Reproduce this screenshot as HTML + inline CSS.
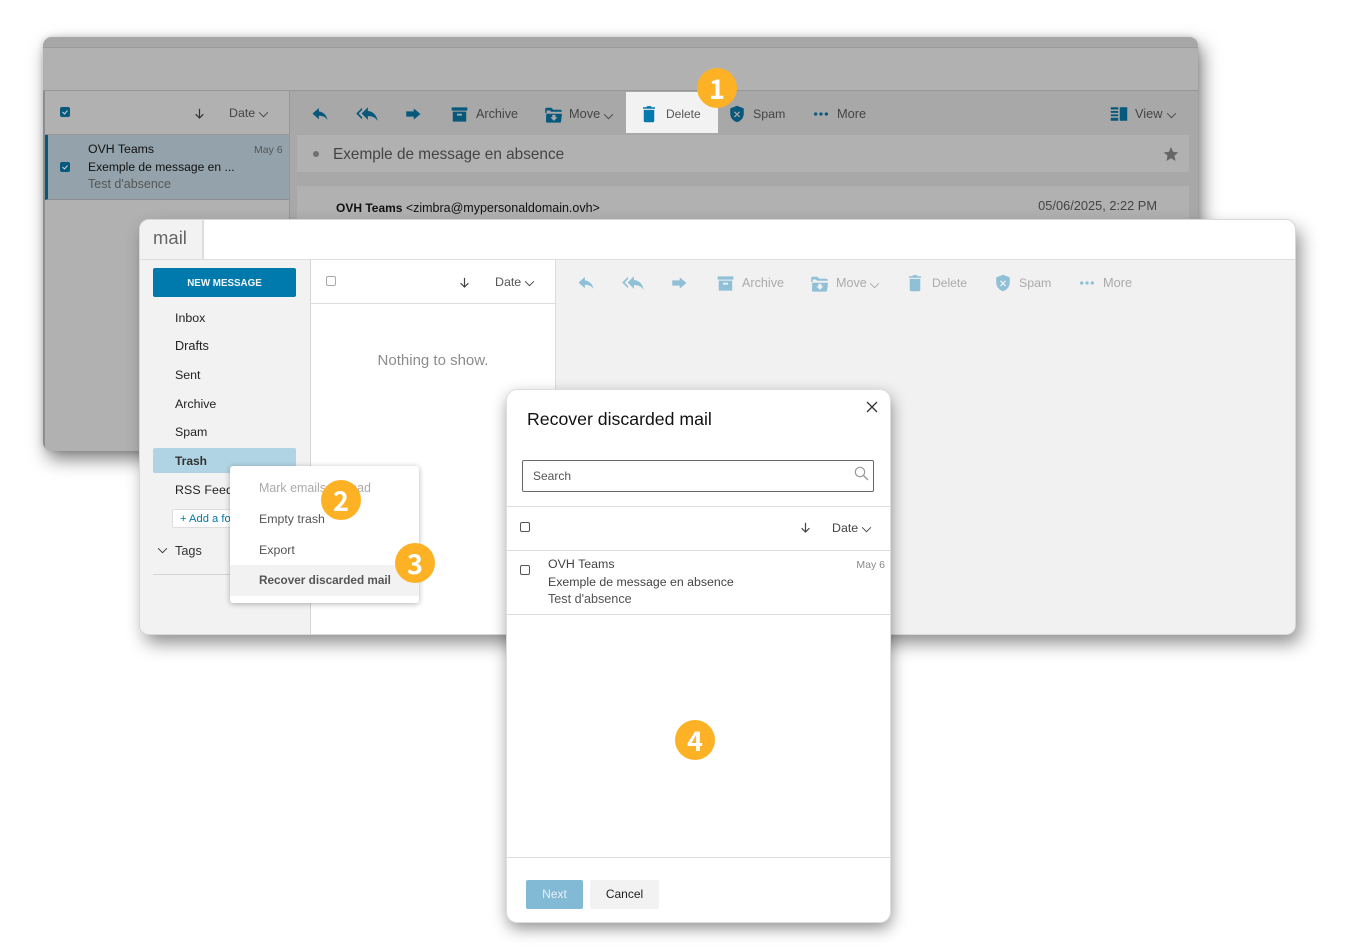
<!DOCTYPE html>
<html><head><meta charset="utf-8"><style>
html,body{margin:0;padding:0;background:#fff}
body{width:1350px;height:950px;position:relative;overflow:hidden;font-family:"Liberation Sans",sans-serif;font-size:12.4px;color:#333}
.a{position:absolute}
.t{position:absolute;white-space:nowrap;line-height:16px}
svg{position:absolute;overflow:visible}
.b{position:absolute;width:40px;height:40px;border-radius:50%;background:#fdb124;color:#fff;font-family:"Noto Sans CJK JP","Liberation Sans",sans-serif;font-weight:bold;font-size:27px;line-height:40px;text-align:center;z-index:50}
.cb{position:absolute;width:8px;height:8px;border:1px solid #555;border-radius:2px;background:#fff}
</style></head><body>
<svg width="0" height="0" style="position:absolute"><defs>
<symbol id="reply" viewBox="0 0 24 24"><path d="M10.500 8.500V4L2 11.500l8.500 7.500v-4.600c5 0 8.800 1.400 11.500 5.600-1-5.500-4.500-10.500-11.500-11.500z"/></symbol>
<symbol id="replyall" viewBox="0 0 24 24"><path d="M6.500 7.500V5L0 11.500 6.500 18v-2.500L2.800 11.500zM13 8.500V4.500l-7 7 7 7v-4.100c5 0 8.500 1.400 11 5.600-1-5.500-4-10.500-11-11.500z"/></symbol>
<symbol id="forward" viewBox="0 0 24 24"><path d="M3 8.500h10V4.500l9 7.500-9 7.500v-4H3z"/></symbol>
<symbol id="archive" viewBox="0 0 24 24"><path fill-rule="evenodd" d="M1 2h22v4.500H1zM2.500 8h19v14h-19zM8.500 11v2.500h7V11z"/></symbol>
<symbol id="move" viewBox="0 0 24 24"><path fill-rule="evenodd" d="M1.500 5.500a2 2 0 012-2h6l2 2.500h9a2 2 0 012 2v.5H9L7.500 7H3.300v3.200h-1.800zM2.800 11h20l-1.300 10a1.500 1.500 0 01-1.500 1.300H4a1.500 1.500 0 01-1.500-1.300zM10.500 12.500v3H8l4.500 4.500 4.500-4.500h-2.500v-3z"/></symbol>
<symbol id="trash" viewBox="0 0 24 24"><path d="M9 1.500h6V3h5v2H4V3h5zM5 6.500h14V21a2 2 0 01-2 2H7a2 2 0 01-2-2z"/></symbol>
<symbol id="spam" viewBox="0 0 24 24"><path fill-rule="evenodd" d="M12 1l9 3.500v7c0 5.500-3.800 9.800-9 11.500-5.200-1.700-9-6-9-11.500v-7zM9.200 8.500L8 9.700l2.800 2.800L8 15.300l1.200 1.200 2.800-2.800 2.800 2.800 1.200-1.200-2.800-2.800L16 9.700l-1.200-1.200L12 11.300z"/></symbol>
<symbol id="more" viewBox="0 0 24 24"><circle cx="4" cy="12" r="2.500"/><circle cx="12" cy="12" r="2.500"/><circle cx="20" cy="12" r="2.500"/></symbol>
<symbol id="view" viewBox="0 0 24 24"><path d="M1 3h10v3H1zM1 8h10v2.500H1zM1 12.500h10V15H1zM1 17h10v4H1zM13 3h10v18H13z"/></symbol>
<symbol id="chev" viewBox="0 0 12 8"><path d="M1 1.500l5 5 5-5" fill="none" stroke="currentColor" stroke-width="1.100"/></symbol>
<symbol id="down" viewBox="0 0 12 12"><path d="M6 1v10M1.800 6.800L6 11l4.200-4.200" fill="none" stroke="currentColor" stroke-width="1.300"/></symbol>
</defs></svg>

<!-- BACK WINDOW -->
<div class="a" style="left:43px;top:37px;width:1155px;height:414px;background:#b1b1b1;border-radius:9px;box-shadow:4px 8px 18px rgba(0,0,0,.5),0 0 6px rgba(0,0,0,.15);overflow:hidden">
 <div class="a" style="left:0;top:0;width:1155px;height:10px;background:#a7a7a7;border-bottom:1px solid #9b9b9b"></div>
 <div class="a" style="left:0;top:53px;width:1155px;height:1px;background:#969696"></div>
 <div class="a" style="left:0;top:54px;width:2px;height:360px;background:#8d8d8d"></div>
 <div class="a" style="left:246px;top:54px;width:909px;height:360px;background:#a8a8a8;border-left:1px solid #969696"></div>
 <div class="a" style="left:2px;top:97px;width:244px;height:1px;background:#969696"></div>
 <div class="a" style="left:2px;top:98px;width:244px;height:65px;background:#94a3ab;border-bottom:1px solid #8a8f93;box-sizing:border-box;border-left:3px solid #08587c"></div>
 <div class="a" style="left:254px;top:98px;width:892px;height:37px;background:#b1b1b1"></div>
 <div class="a" style="left:254px;top:149px;width:892px;height:80px;background:#b1b1b1"></div>
</div>
<div class="a" style="left:60px;top:107px;width:10px;height:10px;background:#08587c;border-radius:2px"></div>
<svg style="left:60px;top:107px" width="10" height="10"><path d="M2.500 5l2 2 3-3.500" fill="none" stroke="#c8d5dc" stroke-width="1"/></svg>
<svg style="left:194px;top:108px;color:#333" width="11" height="11"><use href="#down"/></svg>
<div class="t" style="left:229px;top:105px;color:#444">Date</div>
<svg style="left:258px;top:111px;color:#444" width="11" height="7"><use href="#chev"/></svg>
<div class="a" style="left:60px;top:162px;width:10px;height:10px;background:#08587c;border-radius:2px"></div>
<svg style="left:60px;top:162px" width="10" height="10"><path d="M2.500 5l2 2 3-3.500" fill="none" stroke="#c8d5dc" stroke-width="1"/></svg>
<div class="t" style="left:88px;top:141px;color:#111;font-size:12.3px">OVH Teams</div>
<div class="t" style="left:254px;top:142px;color:#555;font-size:10.5px">May 6</div>
<div class="t" style="left:88px;top:159px;color:#111;font-size:12.1px">Exemple de message en ...</div>
<div class="t" style="left:88px;top:176px;color:#555;font-size:12.5px">Test d'absence</div>

<div class="a" style="left:626px;top:92px;width:92px;height:41px;background:#f2f2f2"></div>
<svg style="left:311px;top:105px;fill:#08587c" width="18" height="18"><use href="#reply"/></svg>
<svg style="left:356px;top:105px;fill:#08587c" width="22" height="18" viewBox="0 0 24 20"><use href="#replyall" width="24" height="24" y="-2"/></svg>
<svg style="left:404px;top:105px;fill:#08587c" width="18" height="18"><use href="#forward"/></svg>
<svg style="left:451px;top:106px;fill:#08587c" width="17" height="17"><use href="#archive"/></svg>
<div class="t" style="left:476px;top:106px;color:#444;font-size:12.6px">Archive</div>
<svg style="left:544px;top:105px;fill:#08587c" width="19" height="19"><use href="#move"/></svg>
<div class="t" style="left:569px;top:106px;color:#444;font-size:12.8px">Move</div>
<svg style="left:603px;top:113px;color:#444" width="11" height="7"><use href="#chev"/></svg>
<svg style="left:640px;top:105px;fill:#0079ad" width="18" height="18"><use href="#trash"/></svg>
<div class="t" style="left:666px;top:106px;color:#555;font-size:12px">Delete</div>
<svg style="left:728px;top:105px;fill:#08587c" width="18" height="18"><use href="#spam"/></svg>
<div class="t" style="left:753px;top:106px;color:#444;font-size:12.4px">Spam</div>
<svg style="left:813px;top:106px;fill:#08587c" width="16" height="16"><use href="#more"/></svg>
<div class="t" style="left:837px;top:106px;color:#444;font-size:12.8px">More</div>
<svg style="left:1110px;top:105px;fill:#08587c" width="18" height="18"><use href="#view"/></svg>
<div class="t" style="left:1135px;top:106px;color:#444;font-size:12.8px">View</div>
<svg style="left:1166px;top:112px;color:#444" width="11" height="7"><use href="#chev"/></svg>
<div class="a" style="left:313px;top:151px;width:6px;height:6px;border-radius:50%;background:#707070"></div>
<div class="t" style="left:333px;top:147px;color:#444;font-size:15.35px">Exemple de message en absence</div>
<svg style="left:1163px;top:146px;fill:#666" width="16" height="16" viewBox="0 0 24 24"><path d="M12 1.500l3.200 7.300 7.800.700-5.900 5.200 1.800 7.800L12 18.400l-6.900 4.100 1.800-7.800L1 9.500l7.800-.7z"/></svg>
<div class="t" style="left:336px;top:200px;color:#111;font-size:12px"><b>OVH Teams</b> <span style="font-size:12.5px">&lt;zimbra@mypersonaldomain.ovh&gt;</span></div>
<div class="t" style="right:193px;top:198px;color:#444;font-size:12.8px">05/06/2025, 2:22 PM</div>

<!-- FRONT WINDOW -->
<div class="a" style="left:140px;top:220px;width:1155px;height:414px;background:#fff;border-radius:9px;box-shadow:0 0 0 1px #d8d8d8,5px 9px 18px rgba(0,0,0,.45);overflow:hidden">
 <div class="a" style="left:0;top:0;width:62px;height:39px;background:#f2f2f2;border-right:2px solid #ddd"></div>
 <div class="a" style="left:0;top:39px;width:1155px;height:1px;background:#ddd"></div>
 <div class="a" style="left:0;top:40px;width:170px;height:374px;background:#f2f2f2;border-right:1px solid #d5d5d5"></div>
 <div class="a" style="left:415px;top:40px;width:740px;height:374px;background:#f1f1f1;border-left:1px solid #ddd"></div>
 <div class="a" style="left:171px;top:83px;width:244px;height:1px;background:#ddd"></div>
 <div class="a" style="left:13px;top:354px;width:143px;height:1px;background:#d5d5d5"></div>
</div>
<div class="t" style="left:153px;top:229px;color:#666;font-size:18.5px;line-height:18px">mail</div>
<div class="a" style="left:153px;top:268px;width:143px;height:29px;background:#0079ad;border-radius:2px;color:#f2f8fb;font-weight:bold;font-size:9.8px;line-height:31px;text-align:center">NEW MESSAGE</div>
<div class="t" style="left:175px;top:310px;color:#222">Inbox</div>
<div class="t" style="left:175px;top:338px;color:#222;font-size:12.7px">Drafts</div>
<div class="t" style="left:175px;top:367px;color:#222">Sent</div>
<div class="t" style="left:175px;top:396px;color:#222">Archive</div>
<div class="t" style="left:175px;top:424px;color:#222">Spam</div>
<div class="a" style="left:153px;top:448px;width:143px;height:25px;background:#b0d4e3;border-radius:2px"></div>
<div class="t" style="left:175px;top:453px;color:#333;font-weight:bold;font-size:12px">Trash</div>
<div class="t" style="left:175px;top:482px;color:#222;font-size:12.4px;letter-spacing:.1px">RSS Feeds</div>
<div class="a" style="left:172px;top:509px;width:83px;height:17px;background:#fff;border:1px solid #ddd;border-radius:2px;color:#0079ad;font-size:11.2px;line-height:18px;padding-left:7px">+ Add a folder</div>
<svg style="left:157px;top:547px;color:#333" width="11" height="7"><use href="#chev"/></svg>
<div class="t" style="left:175px;top:543px;color:#333;font-size:12.7px">Tags</div>

<div class="cb" style="left:326px;top:276px;border-color:#aaa"></div>
<svg style="left:459px;top:277px;color:#444" width="11" height="11"><use href="#down"/></svg>
<div class="t" style="left:495px;top:274px;color:#555">Date</div>
<svg style="left:524px;top:280px;color:#444" width="11" height="7"><use href="#chev"/></svg>
<div class="t" style="left:311px;width:244px;text-align:center;top:353px;color:#8c8c8c;font-size:15px">Nothing to show.</div>

<svg style="left:577px;top:274px;fill:#8fc0d8" width="18" height="18"><use href="#reply"/></svg>
<svg style="left:622px;top:274px;fill:#8fc0d8" width="22" height="18" viewBox="0 0 24 20"><use href="#replyall" width="24" height="24" y="-2"/></svg>
<svg style="left:670px;top:274px;fill:#8fc0d8" width="18" height="18"><use href="#forward"/></svg>
<svg style="left:717px;top:275px;fill:#8fc0d8" width="17" height="17"><use href="#archive"/></svg>
<div class="t" style="left:742px;top:275px;color:#aaa;font-size:12.6px">Archive</div>
<svg style="left:810px;top:274px;fill:#8fc0d8" width="19" height="19"><use href="#move"/></svg>
<div class="t" style="left:836px;top:275px;color:#aaa;font-size:12.6px">Move</div>
<svg style="left:869px;top:282px;color:#aaa" width="11" height="7"><use href="#chev"/></svg>
<svg style="left:906px;top:274px;fill:#8fc0d8" width="18" height="18"><use href="#trash"/></svg>
<div class="t" style="left:932px;top:275px;color:#aaa;font-size:12.1px">Delete</div>
<svg style="left:994px;top:274px;fill:#8fc0d8" width="18" height="18"><use href="#spam"/></svg>
<div class="t" style="left:1019px;top:275px;color:#aaa;font-size:12.4px">Spam</div>
<svg style="left:1079px;top:275px;fill:#8fc0d8" width="16" height="16"><use href="#more"/></svg>
<div class="t" style="left:1103px;top:275px;color:#aaa;font-size:12.8px">More</div>

<!-- CONTEXT MENU -->
<div class="a" style="left:230px;top:466px;width:189px;height:137px;background:#fff;border-radius:3px;box-shadow:0 1px 6px rgba(0,0,0,.3)">
 <div class="a" style="left:0;top:99px;width:189px;height:31px;background:#f2f2f2"></div>
</div>
<div class="t" style="left:259px;top:480px;color:#aaa;font-size:12.45px">Mark emails as read</div>
<div class="t" style="left:259px;top:511px;color:#555;font-size:12.35px">Empty trash</div>
<div class="t" style="left:259px;top:542px;color:#555">Export</div>
<div class="t" style="left:259px;top:573px;color:#555;font-weight:bold;font-size:11.75px">Recover discarded mail</div>

<!-- DIALOG -->
<div class="a" style="left:507px;top:390px;width:383px;height:532px;background:#fff;border-radius:10px;box-shadow:0 0 0 1px #ddd,1px 6px 16px rgba(0,0,0,.45)">
 <div class="a" style="left:0;top:116px;width:383px;height:1px;background:#ddd"></div>
 <div class="a" style="left:0;top:160px;width:383px;height:1px;background:#ddd"></div>
 <div class="a" style="left:0;top:224px;width:383px;height:1px;background:#ddd"></div>
 <div class="a" style="left:0;top:467px;width:383px;height:1px;background:#ddd"></div>
</div>
<div class="t" style="left:527px;top:409px;color:#111;font-size:17.7px;line-height:20px">Recover discarded mail</div>
<svg style="left:866px;top:401px" width="12" height="12"><path d="M1 1l10 10M11 1L1 11" stroke="#333" stroke-width="1.300" fill="none"/></svg>
<div class="a" style="left:522px;top:460px;width:350px;height:30px;border:1px solid #666;border-radius:2px"></div>
<div class="t" style="left:533px;top:468px;color:#555;font-size:12px">Search</div>
<svg style="left:854px;top:466px" width="15" height="15"><circle cx="6" cy="6" r="4.700" fill="none" stroke="#999" stroke-width="1.200"/><path d="M9.500 9.500l4.500 4.500" stroke="#999" stroke-width="1.400"/></svg>
<div class="cb" style="left:520px;top:522px"></div>
<svg style="left:800px;top:522px;color:#444" width="11" height="11"><use href="#down"/></svg>
<div class="t" style="left:832px;top:520px;color:#444">Date</div>
<svg style="left:861px;top:526px;color:#444" width="11" height="7"><use href="#chev"/></svg>
<div class="cb" style="left:520px;top:565px"></div>
<div class="t" style="left:548px;top:556px;color:#444">OVH Teams</div>
<div class="t" style="right:465px;top:557px;color:#888;font-size:10.5px">May 6</div>
<div class="t" style="left:548px;top:574px;color:#444;font-size:12.33px">Exemple de message en absence</div>
<div class="t" style="left:548px;top:591px;color:#555;font-size:12.6px">Test d'absence</div>
<div class="a" style="left:526px;top:880px;width:57px;height:29px;background:#82bad6;border-radius:2px;color:#e6f1f7;line-height:29px;text-align:center;font-size:12px">Next</div>
<div class="a" style="left:590px;top:880px;width:69px;height:29px;background:#f2f2f2;border-radius:2px;color:#222;line-height:29px;text-align:center;font-size:12px">Cancel</div>

<!-- BADGES -->
<div class="b" style="left:697px;top:68px;line-height:39px">1</div>
<div class="b" style="left:321px;top:480px">2</div>
<div class="b" style="left:395px;top:543px;line-height:39px">3</div>
<div class="b" style="left:675px;top:720px">4</div>
</body></html>
